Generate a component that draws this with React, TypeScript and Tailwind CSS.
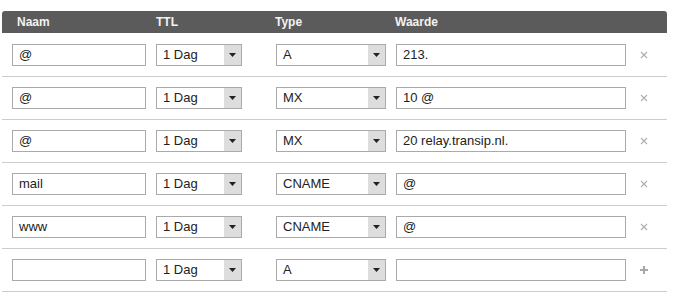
import { ReactNode } from 'react';

type DnsRecord = {
  naam: string;
  ttl: string;
  type: string;
  waarde: string;
};

const records: DnsRecord[] = [
  { naam: '@', ttl: '1 Dag', type: 'A', waarde: '213.' },
  { naam: '@', ttl: '1 Dag', type: 'MX', waarde: '10 @' },
  { naam: '@', ttl: '1 Dag', type: 'MX', waarde: '20 relay.transip.nl.' },
  { naam: 'mail', ttl: '1 Dag', type: 'CNAME', waarde: '@' },
  { naam: 'www', ttl: '1 Dag', type: 'CNAME', waarde: '@' },
];

function TextBox({ value, width }: { value: string; width: string }) {
  return (
    <div className={`${width} flex h-[22px] items-center border border-[#aaaaaa] bg-white pl-[6px] text-[13px] text-[#222]`}>
      {value}
    </div>
  );
}

function SelectBox({ value, width }: { value: string; width: string }) {
  return (
    <div className={`${width} flex h-[22px] items-stretch border border-[#aaaaaa] bg-white text-[13px] text-[#222]`}>
      <span className="flex flex-1 items-center pl-[6px]">{value}</span>
      <span className="flex w-[17px] items-center justify-center bg-[#dddddd]">
        <svg width="7" height="4" viewBox="0 0 7 4">
          <path d="M0 0h7L3.5 4z" fill="#222" />
        </svg>
      </span>
    </div>
  );
}

function Row({ children, action }: { children: ReactNode; action: ReactNode }) {
  return (
    <div className="flex h-[43px] items-center border-b border-[#cccccc] pl-[10px]">
      {children}
      <span className="ml-[12px] flex w-[12px] justify-center text-[#aaaaaa]">{action}</span>
    </div>
  );
}

function Fields({ r }: { r: DnsRecord }) {
  return (
    <>
      <TextBox value={r.naam} width="w-[134px]" />
      <div className="ml-[10px]">
        <SelectBox value={r.ttl} width="w-[86px]" />
      </div>
      <div className="ml-[34px]">
        <SelectBox value={r.type} width="w-[110px]" />
      </div>
      <div className="ml-[10px]">
        <TextBox value={r.waarde} width="w-[230px]" />
      </div>
    </>
  );
}

export default function App() {
  return (
    <div className="h-[301px] w-[682px] bg-white pl-[2px] pt-[11px] font-['Liberation_Sans',Arial,sans-serif]">
      <div className="w-[665px]">
        <div className="mb-[1px] flex h-[22px] items-center rounded-t-[3px] bg-[#5b5b5b] text-[12px] font-bold text-[#f2f2f2]">
          <span className="w-[154px] pl-[15px]">Naam</span>
          <span className="w-[119px]">TTL</span>
          <span className="w-[120px]">Type</span>
          <span>Waarde</span>
        </div>
        {records.map((r, i) => (
          <Row
            key={i}
            action={
              <svg width="8" height="8" viewBox="0 0 8 8">
                <path d="M1 1l6 6M7 1L1 7" stroke="#b0b0b0" strokeWidth="1.2" />
              </svg>
            }
          >
            <Fields r={r} />
          </Row>
        ))}
        <Row
          action={
            <svg width="8" height="8" viewBox="0 0 8 8">
              <path d="M4 0v8M0 4h8" stroke="#a8a8a8" strokeWidth="2" />
            </svg>
          }
        >
          <Fields r={{ naam: '', ttl: '1 Dag', type: 'A', waarde: '' }} />
        </Row>
      </div>
    </div>
  );
}
